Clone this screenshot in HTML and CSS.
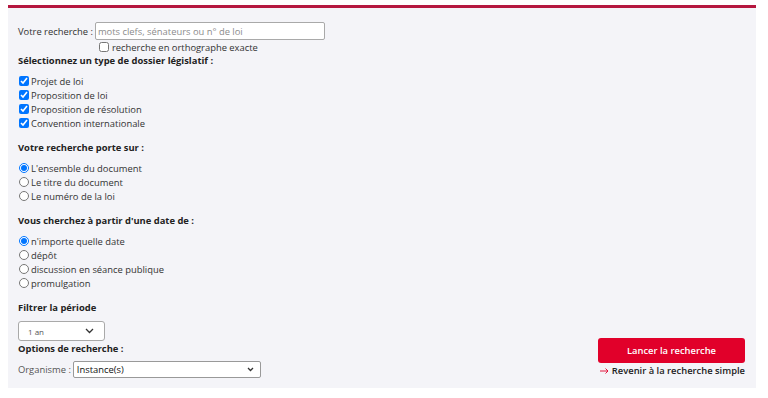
FILE: index.html
```html
<!DOCTYPE html>
<html lang="fr">
<head>
    <meta charset="UTF-8">
    <title>Recherche avancée</title>
    <link rel="stylesheet" href="styles.css">
</head>
<body>
    <form class="panel">
        <div class="search-row">
            <label for="q">Votre recherche :</label>
            <input id="q" type="text" class="text-input" placeholder="mots clefs, sénateurs ou n° de loi">
        </div>
        <label class="exact"><input type="checkbox">recherche en orthographe exacte</label>

        <h3 class="heading">Sélectionnez un type de dossier législatif :</h3>
        <ul class="options">
            <li><label><input type="checkbox" checked>Projet de loi</label></li>
            <li><label><input type="checkbox" checked>Proposition de loi</label></li>
            <li><label><input type="checkbox" checked>Proposition de résolution</label></li>
            <li><label><input type="checkbox" checked>Convention internationale</label></li>
        </ul>

        <h3 class="heading">Votre recherche porte sur :</h3>
        <ul class="options">
            <li><label><input type="radio" name="porte" checked>L'ensemble du document</label></li>
            <li><label><input type="radio" name="porte">Le titre du document</label></li>
            <li><label><input type="radio" name="porte">Le numéro de la loi</label></li>
        </ul>

        <h3 class="heading">Vous cherchez à partir d'une date de :</h3>
        <ul class="options">
            <li><label><input type="radio" name="date" checked>n'importe quelle date</label></li>
            <li><label><input type="radio" name="date">dépôt</label></li>
            <li><label><input type="radio" name="date">discussion en séance publique</label></li>
            <li><label><input type="radio" name="date">promulgation</label></li>
        </ul>

        <div class="bottom">
            <div class="bottom-left">
                <h3 class="heading">Filtrer la période</h3>
                <div class="period">
                    <span>1 an</span>
                    <svg width="9" height="6" viewBox="0 0 9 6"><path d="M1 1l3.5 3.5 3.5-3.5" fill="none" stroke="#333" stroke-width="1.3"/></svg>
                </div>
                <h3 class="heading tight">Options de recherche :</h3>
                <div class="org-row">
                    <span>Organisme :</span>
                    <div class="org-select">
                        <span>Instance(s)</span>
                        <svg width="7" height="5" viewBox="0 0 7 5"><path d="M1 1l2.5 2.5 2.5-2.5" fill="none" stroke="#333" stroke-width="1.3"/></svg>
                    </div>
                </div>
            </div>
            <div class="bottom-right">
                <button type="button" class="submit">Lancer la recherche</button>
                <a href="#" class="back">
                    <svg class="arrow" width="9" height="6" viewBox="0 0 9 6"><path d="M0 3h8M5.5 0.5L8 3 5.5 5.5" fill="none" stroke="#e1002a" stroke-width="0.9"/></svg>
                    <span>Revenir à la recherche simple</span>
                </a>
            </div>
        </div>
    </form>
</body>
</html>
```

FILE: styles.css
```css
body {
    margin: 0;
    background: #fff;
    font-family: "Open Sans", "Liberation Sans", sans-serif;
    font-size: 9.4px;
    color: #333;
}
.panel {
    margin: 5px 12px 0 8px;
    border-top: 3px solid #b5173f;
    background: #f4f4f8;
    padding: 14px 11px 10px 10px;
}
.search-row {
    display: flex;
    align-items: center;
    gap: 2px;
    height: 18px;
}
.text-input {
    width: 230px;
    height: 18px;
    box-sizing: border-box;
    border: 1px solid #a9a9a9;
    border-radius: 2px;
    background: #fff;
    font-family: inherit;
    font-size: 9.4px;
    padding: 0 2px;
}
.text-input::placeholder {
    color: #8c8c8c;
}
.exact {
    display: flex;
    align-items: center;
    margin-left: 81px;
    height: 14px;
}
.exact input {
    margin: 0 3px 0 0;
    width: 10px;
    height: 10px;
}
.heading {
    margin: 0 0 6px 0;
    font-size: 9.4px;
    font-weight: 700;
    color: #222;
    line-height: 14px;
    height: 14px;
}
.heading.tight {
    margin-bottom: 5px;
}
.options {
    list-style: none;
    margin: 0 0 11px 0;
    padding: 0;
}
.options li {
    height: 14px;
}
.options label {
    display: flex;
    align-items: center;
    height: 14px;
}
.options input {
    margin: 0 2px 0 1px;
    width: 10px;
    height: 10px;
}
.bottom {
    display: flex;
    justify-content: space-between;
    align-items: flex-end;
}
.period {
    display: flex;
    align-items: center;
    justify-content: space-between;
    width: 87px;
    height: 20px;
    box-sizing: border-box;
    border: 1px solid #a9a9a9;
    border-radius: 3px;
    background: #fff;
    padding: 0 10px 0 9px;
    font-size: 8px;
    color: #555;
    margin-bottom: 1px;
}
.org-row {
    display: flex;
    align-items: center;
    gap: 2px;
    height: 17px;
}
.org-row > span {
    color: #555;
}
.org-select {
    display: flex;
    align-items: center;
    justify-content: space-between;
    width: 188px;
    height: 17px;
    box-sizing: border-box;
    border: 1px solid #999;
    border-radius: 2px;
    background: #fff;
    padding: 0 6px 0 3px;
    color: #111;
}
.bottom-right {
    display: flex;
    flex-direction: column;
    width: 147px;
}
.submit {
    height: 25px;
    border: none;
    border-radius: 3px;
    background: #e1002a;
    color: #fff;
    font-family: inherit;
    font-size: 9.4px;
    font-weight: 600;
}
.back {
    margin-top: 1px;
    height: 14px;
    line-height: 14px;
    text-decoration: none;
    color: #222;
    font-weight: 600;
    white-space: nowrap;
    display: flex;
    align-items: center;
    justify-content: space-between;
}
.arrow {
    margin-left: 2px;
}
```
